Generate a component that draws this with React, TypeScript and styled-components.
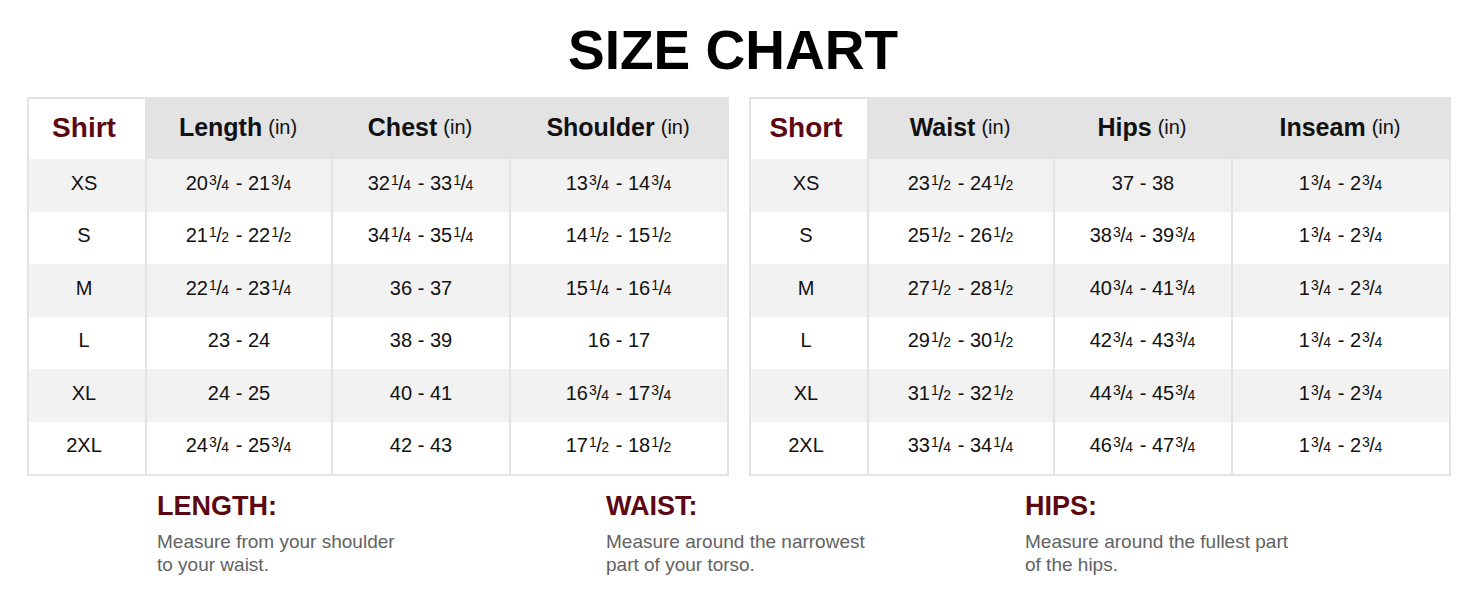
import React from "react";
import styled, { createGlobalStyle } from "styled-components";

const Global = createGlobalStyle`
  html, body { margin: 0; padding: 0; background: #fff; }
  body { font-family: "Liberation Sans", Arial, sans-serif; color: #111; }
`;

const Page = styled.div`
  width: 1464px;
  height: 600px;
  box-sizing: border-box;
  padding: 0 13px 0 27px;
  display: flex;
  flex-direction: column;
`;

const Title = styled.h1`
  margin: 0;
  height: 97px;
  display: flex;
  align-items: center;
  justify-content: center;
  padding-right: 12px;
  padding-top: 2px;
  box-sizing: border-box;
  font-size: 55px;
  font-weight: 700;
  color: #000;
`;

const Tables = styled.div`
  display: flex;
  gap: 20px;
`;

const Table = styled.div`
  width: 702px;
  height: 379px;
  box-sizing: border-box;
  border: 2px solid #e3e3e3;
  display: grid;
  grid-template-columns: 116px 186px 178px 218px;
  grid-template-rows: 60px repeat(6, 1fr);
`;

const HeadCell = styled.div<{ $first?: boolean }>`
  display: flex;
  align-items: center;
  justify-content: center;
  background: ${(p) => (p.$first ? "#fff" : "#e3e3e3")};
  color: ${(p) => (p.$first ? "#5c0812" : "#111")};
  font-weight: 700;
  font-size: ${(p) => (p.$first ? "28px" : "25px")};
  padding: 0 ${(p) => (p.$first ? "6px" : "0")} 3px 0;
  box-sizing: border-box;
  white-space: nowrap;
`;

const Unit = styled.span`
  font-weight: 400;
  font-size: 20px;
  margin-left: 6px;
`;

const Cell = styled.div<{ $alt: boolean; $sep: boolean; $first: boolean }>`
  display: flex;
  align-items: center;
  justify-content: center;
  background: ${(p) => (p.$alt ? "#f2f2f2" : "#fff")};
  border-left: ${(p) => (p.$sep ? "2px solid #e3e3e3" : "none")};
  box-sizing: border-box;
  padding: 0 ${(p) => (p.$first ? "6px" : "0")} 4px 0;
  font-size: 20px;
  color: #111;
  white-space: pre;
`;

const Frac = styled.span`
  display: inline-block;
  white-space: nowrap;
  margin: 0 1px 0 1px;
`;

const Num = styled.span`
  font-size: 14px;
  vertical-align: 5px;
`;

const Den = styled.span`
  font-size: 14px;
`;

const Slash = styled.span`
  font-size: 20px;
  margin: 0 -0.5px;
`;

const Notes = styled.div`
  display: grid;
  grid-template-columns: 449px 419px 300px;
  padding-left: 130px;
  padding-top: 14px;
`;

const Note = styled.div`
  display: flex;
  flex-direction: column;
`;

const NoteTitle = styled.div`
  color: #5c0812;
  font-weight: 700;
  font-size: 27px;
  line-height: 32px;
  margin-bottom: 8px;
`;

const NoteText = styled.div`
  color: #626262;
  font-size: 19px;
  line-height: 23px;
  white-space: pre-line;
`;

type TableData = {
  name: string;
  cols: string[];
  rows: string[][];
};

const shirt: TableData = {
  name: "Shirt",
  cols: ["Length", "Chest", "Shoulder"],
  rows: [
    ["XS", "20¾ - 21¾", "32¼ - 33¼", "13¾ - 14¾"],
    ["S", "21½ - 22½", "34¼ - 35¼", "14½ - 15½"],
    ["M", "22¼ - 23¼", "36 - 37", "15¼ - 16¼"],
    ["L", "23 - 24", "38 - 39", "16 - 17"],
    ["XL", "24 - 25", "40 - 41", "16¾ - 17¾"],
    ["2XL", "24¾ - 25¾", "42 - 43", "17½ - 18½"],
  ],
};

const short: TableData = {
  name: "Short",
  cols: ["Waist", "Hips", "Inseam"],
  rows: [
    ["XS", "23½ - 24½", "37 - 38", "1¾ - 2¾"],
    ["S", "25½ - 26½", "38¾ - 39¾", "1¾ - 2¾"],
    ["M", "27½ - 28½", "40¾ - 41¾", "1¾ - 2¾"],
    ["L", "29½ - 30½", "42¾ - 43¾", "1¾ - 2¾"],
    ["XL", "31½ - 32½", "44¾ - 45¾", "1¾ - 2¾"],
    ["2XL", "33¼ - 34¼", "46¾ - 47¾", "1¾ - 2¾"],
  ],
};

const fracParts: Record<string, [string, string]> = {
  "¼": ["1", "4"],
  "½": ["1", "2"],
  "¾": ["3", "4"],
};

function Fraction({ ch }: { ch: string }) {
  const [n, d] = fracParts[ch];
  return (
    <Frac aria-label={ch}>
      <Num>{n}</Num>
      <Slash>/</Slash>
      <Den>{d}</Den>
    </Frac>
  );
}

function Value({ text }: { text: string }) {
  const parts = text.split(/([¼½¾])/);
  return (
    <span>
      {parts.map((p, i) =>
        fracParts[p] ? <Fraction key={i} ch={p} /> : <React.Fragment key={i}>{p}</React.Fragment>
      )}
    </span>
  );
}

function SizeTable({ data }: { data: TableData }) {
  return (
    <Table>
      <HeadCell $first>{data.name}</HeadCell>
      {data.cols.map((c) => (
        <HeadCell key={c}>
          {c}
          <Unit>(in)</Unit>
        </HeadCell>
      ))}
      {data.rows.map((r, ri) =>
        r.map((v, ci) => (
          <Cell key={`${ri}-${ci}`} $alt={ri % 2 === 0} $sep={ci > 0} $first={ci === 0}>
            <Value text={v} />
          </Cell>
        ))
      )}
    </Table>
  );
}

const notes = [
  { t: "LENGTH:", d: "Measure from your shoulder\nto your waist." },
  { t: "WAIST:", d: "Measure around the narrowest\npart of your torso." },
  { t: "HIPS:", d: "Measure around the fullest part\nof the hips." },
];

export default function App() {
  return (
    <>
      <Global />
      <Page>
        <Title>SIZE CHART</Title>
        <Tables>
          <SizeTable data={shirt} />
          <SizeTable data={short} />
        </Tables>
        <Notes>
          {notes.map((n) => (
            <Note key={n.t}>
              <NoteTitle>{n.t}</NoteTitle>
              <NoteText>{n.d}</NoteText>
            </Note>
          ))}
        </Notes>
      </Page>
    </>
  );
}
